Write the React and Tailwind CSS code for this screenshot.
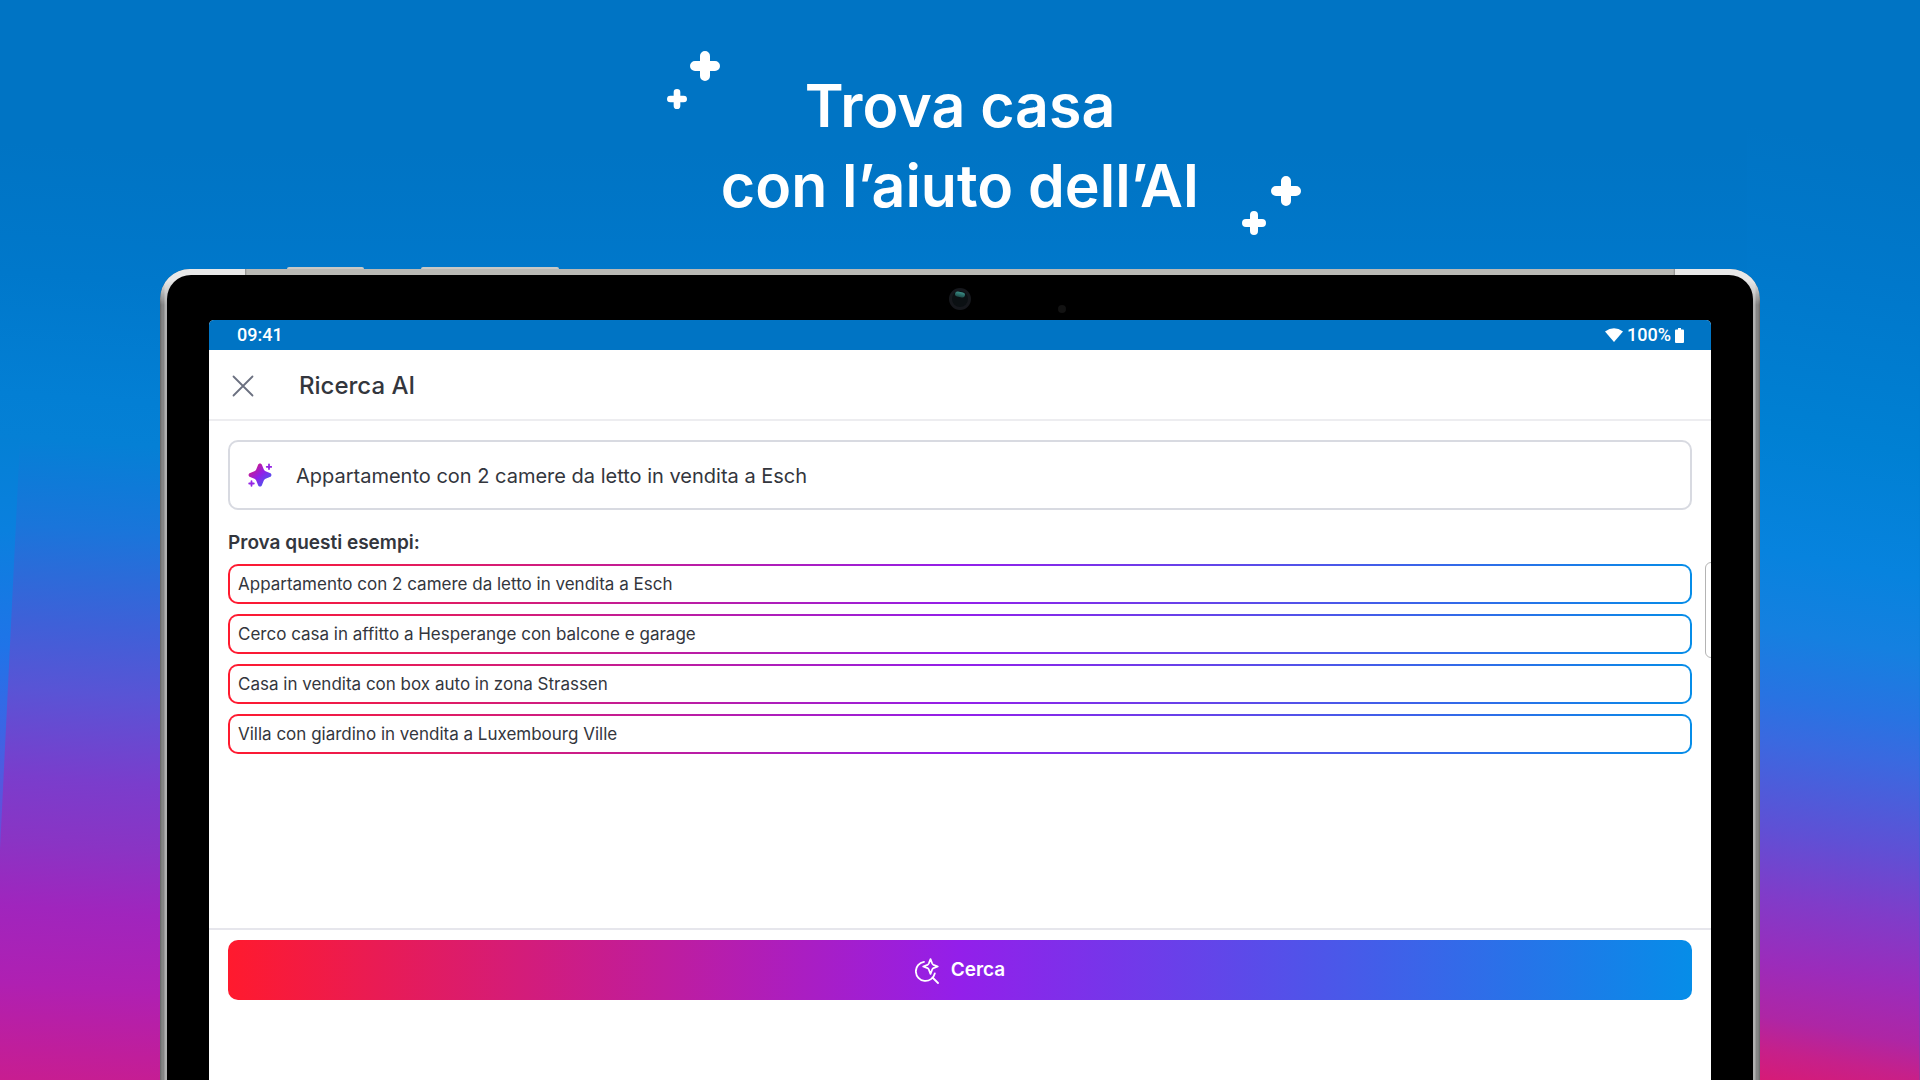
import React, { useState } from 'react';

const EXAMPLES = [
    'Appartamento con 2 camere da letto in vendita a Esch',
    'Cerco casa in affitto a Hesperange con balcone e garage',
    'Casa in vendita con box auto in zona Strassen',
    'Villa con giardino in vendita a Luxembourg Ville',
];

const Plus = ({ className }) => (
    <svg viewBox="0 0 30 30" className={className} aria-hidden="true">
        <path d="M15 5v20M5 15h20" stroke="white" strokeWidth="10" strokeLinecap="round" />
    </svg>
);

const CloseIcon = () => (
    <svg viewBox="0 0 24 24" className="size-6" fill="none" stroke="#6b7080" strokeWidth="1.8" strokeLinecap="round" aria-hidden="true">
        <path d="M2.5 2.5l19 19M21.5 2.5l-19 19" />
    </svg>
);

const SparkleIcon = () => (
    <svg viewBox="0 0 24 24" className="size-6 shrink-0" aria-hidden="true">
        <defs>
            <linearGradient id="sparkle" x1="0" y1="0" x2="24" y2="24" gradientUnits="userSpaceOnUse">
                <stop offset="0.15" stopColor="#d01a84" />
                <stop offset="0.5" stopColor="#9120e8" />
                <stop offset="0.9" stopColor="#3a66f0" />
            </linearGradient>
        </defs>
        <path
            fill="url(#sparkle)"
            d="M12 .6c.9 0 1.600.5 2 1.500l1.800 4.300c.4.9.9 1.400 1.800 1.800l4.300 1.800c1 .4 1.500 1.100 1.500 2s-.5 1.600-1.500 2l-4.300 1.800c-.9.4-1.400.9-1.800 1.800L14 21.900c-.4 1-1.100 1.500-2 1.500s-1.600-.5-2-1.500l-1.800-4.300c-.4-.9-.9-1.400-1.800-1.800L2.100 14C1.100 13.600.6 12.900.6 12s.5-1.600 1.500-2l4.300-1.800c.9-.4 1.400-.9 1.800-1.800L10 2.100C10.400 1.100 11.100.6 12 .6z"
        />
        <path d="M21 1.500v4.600M18.700 3.800h4.600" stroke="#9526e4" strokeWidth="1.8" strokeLinecap="round" />
        <path d="M3.500 18.200v4.600M1.200 20.500h4.600" stroke="#9526e4" strokeWidth="1.8" strokeLinecap="round" />
    </svg>
);

const SearchSparkleIcon = () => (
    <svg viewBox="0 0 24 26" className="h-[26px] w-6" fill="none" stroke="white" strokeWidth="1.8" strokeLinecap="round" strokeLinejoin="round" aria-hidden="true">
        <path d="M9 3.800A9.600 9.600 0 1 0 19.800 15.500M17.500 19.500l5.500 5.500" />
        <path d="M15.500 1.200l1.700 4.300c.3.700.6 1 1.300 1.300l4.300 1.700-4.300 1.700c-.7.3-1 .6-1.300 1.300l-1.700 4.300-1.700-4.300c-.3-.7-.6-1-1.300-1.300L8.200 8.500l4.300-1.700c.7-.3 1-.6 1.300-1.300z" />
    </svg>
);

const StatusBar = () => (
    <div className="flex h-[30px] items-center justify-between bg-[#0074c4] pr-[27px] pl-7 font-['Roboto',sans-serif] text-lg font-medium text-white">
        <span>09:41</span>
        <div className="flex items-center gap-1">
            <svg viewBox="0 0 18 14" className="h-3.5 w-[18px]" fill="white" aria-hidden="true">
                <path d="M0 3.500Q9-3 18 3.500L9 14z" />
            </svg>
            <span>100%</span>
            <svg viewBox="0 0 9 15" className="h-[15px] w-[9px]" fill="white" aria-hidden="true">
                <path d="M3 0h3v1.500h2a1 1 0 0 1 1 1V14a1 1 0 0 1-1 1H1a1 1 0 0 1-1-1V2.500a1 1 0 0 1 1-1h2z" />
            </svg>
        </div>
    </div>
);

export default function App() {
    const [query, setQuery] = useState(EXAMPLES[0]);

    return (
        <div className="relative flex h-screen flex-col overflow-hidden bg-[linear-gradient(184deg,#0074c4_14%,#0078cb_26%,#037fd4_37%,#0580d5_41%,#0f7ad8_45%,#1a75da_49%,#3f60d8_58%,#5954d5_64%,#7a3dcc_72%,#8a34c4_78%,#a025bd_84%,#af20b2_91%,#c81d90_100%),linear-gradient(190deg,#0074c4_14%,#0078cb_26%,#0080d3_41%,#0783de_52%,#1580e0_59%,#2873e2_65%,#3a69e0_69%,#5f50d5_77%,#803cc9_83%,#9b2cbb_89%,#ae26a5_94%,#c6208a_97%,#d81a75_100%),linear-gradient(180deg,#0074c4_14%,#0078cb_26%)] bg-[length:9%_100%,9%_100%,100%_100%] bg-[position:left_top,right_top,center] bg-no-repeat font-['Inter',sans-serif] text-[#33363d]">
            {/* Light edge on the far left of the backdrop */}
            <div className="absolute top-[440px] left-0 h-[410px] w-5 bg-[linear-gradient(180deg,#0480d5,#0a80de_22%,#1f74e8_50%,#3a66e5_70%,#7048d8)] [clip-path:polygon(0_0,100%_0,0_100%)]" />

            <header className="flex h-[269px] shrink-0 justify-center pt-[66px]">
                <div className="relative">
                    <h1 className="text-center text-[59px] leading-[80px] font-semibold text-white">
                        Trova casa
                        <br />
                        con l’aiuto dell’AI
                    </h1>
                    <Plus className="absolute -top-[15px] -left-[31px] size-[30px]" />
                    <Plus className="absolute top-[23px] -left-[54px] size-5" />
                    <Plus className="absolute top-[110px] -right-[102px] size-[30px]" />
                    <Plus className="absolute top-[145px] -right-[67px] size-6" />
                </div>
            </header>

            {/* Tablet */}
            <div className="relative mx-auto flex w-5/6 flex-1 flex-col rounded-t-[30px] bg-[linear-gradient(90deg,#666_0,#858585_2px,#858585_4px,#b0b0b0_5px,#b0b0b0_50%,#b0b0b0_calc(100%-5px),#858585_calc(100%-4px),#858585_calc(100%-2px),#666_100%)] px-[7px] pt-1.5">
                <div className="absolute -top-[2px] left-[127px] h-[2px] w-[77px] rounded-t-full bg-[#c9c9c6]" />
                <div className="absolute -top-[2px] left-[261px] h-[2px] w-[138px] rounded-t-full bg-[#c9c9c6]" />
                <div className="absolute inset-x-0 top-0 h-9 rounded-t-[30px] bg-[linear-gradient(90deg,#e8e8e8_85px,#8e8e8c_85px,#b9b9b5_87px,#b9b9b5_calc(100%-87px),#8e8e8c_calc(100%-85px),#e8e8e8_calc(100%-85px))] [mask-image:linear-gradient(black_30%,transparent)]" />
                <div className="relative flex flex-1 flex-col rounded-t-[24px] bg-black px-[42px] pt-[45px]">
                    <div className="absolute top-[13px] left-1/2 flex size-[22px] -translate-x-1/2 justify-center rounded-full border-[3px] border-[#16181d] bg-[#0b1013] pt-[1px]">
                        <div className="h-[5px] w-[10px] rotate-12 rounded-full bg-linear-to-b from-[#3c9088] to-[#1d4a48]" />
                    </div>
                    <div className="absolute top-[30px] left-[891px] size-2 rounded-full bg-[#121212]" />

                    {/* Screen */}
                    <main className="relative flex flex-1 flex-col overflow-hidden rounded-t-[5px] bg-white">
                        <StatusBar />

                        <div className="flex h-[71px] items-center gap-11 border-b-2 border-[#ededf0] px-[22px] pt-0.5">
                            <button type="button" aria-label="Chiudi" className="flex size-6 items-center justify-center">
                                <CloseIcon />
                            </button>
                            <h2 className="text-2xl font-medium">Ricerca AI</h2>
                        </div>

                        <form className="flex flex-1 flex-col" onSubmit={(e) => e.preventDefault()}>
                            <div className="flex flex-col px-[19px] pt-[19px]">
                                <label className="flex h-[70px] items-center gap-6 rounded-[10px] border-2 border-[#d8dae1] px-[18px]">
                                    <SparkleIcon />
                                    <input
                                        type="text"
                                        aria-label="Descrivi la casa che cerchi"
                                        value={query}
                                        onChange={(e) => setQuery(e.target.value)}
                                        className="w-full pt-0.5 text-xl outline-none"
                                    />
                                </label>

                                <h3 className="mt-[19px] text-[19px] leading-7 font-semibold">Prova questi esempi:</h3>
                                <div className="mt-[7px] flex flex-col gap-[10px]">
                                    {EXAMPLES.map((example) => (
                                        <button
                                            key={example}
                                            type="button"
                                            onClick={() => setQuery(example)}
                                            className="h-10 rounded-[10px] border-2 border-transparent bg-[linear-gradient(white,white),linear-gradient(90deg,#ff1a2e,#931fea_50%,#068de8)] bg-origin-border px-2 pt-0.5 text-left text-[17px] [background-clip:padding-box,border-box]"
                                        >
                                            {example}
                                        </button>
                                    ))}
                                </div>
                            </div>

                            <div className="mt-auto h-[152px] border-t-2 border-[#e6e6ec] px-[19px] pt-[10px]">
                                <button
                                    type="submit"
                                    className="flex h-[60px] w-full items-center justify-center gap-3 rounded-[10px] bg-[linear-gradient(90deg,#ff1a2e,#931fea_50%,#068de8)] pt-px text-[19px] font-semibold text-white"
                                >
                                    <SearchSparkleIcon />
                                    Cerca
                                </button>
                            </div>
                        </form>

                        {/* Side panel handle */}
                        <div className="absolute top-[242px] -right-1 h-[96px] w-[10px] rounded-l-[6px] border border-[#b4b4b4] bg-white" />
                    </main>
                </div>
            </div>
        </div>
    );
}
